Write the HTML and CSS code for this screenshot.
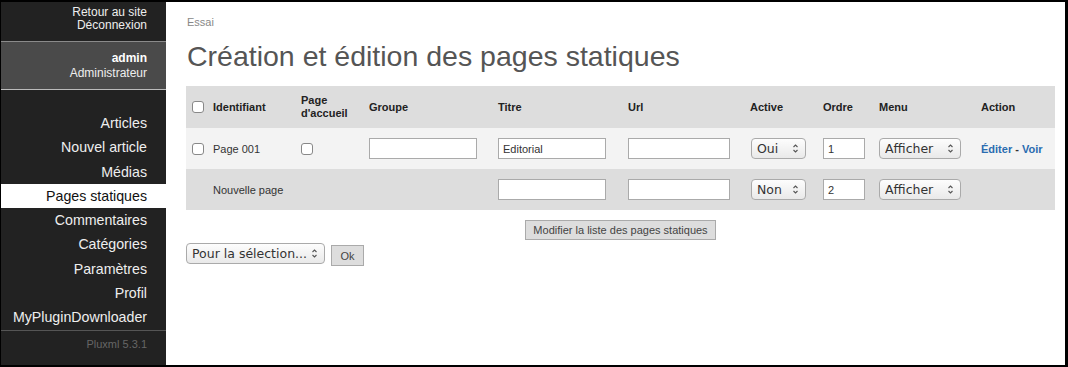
FILE: index.html
```html
<!DOCTYPE html>
<html lang="fr">

<head>
    <meta charset="UTF-8">
    <title>Pages statiques - Pluxml</title>
    <link rel="stylesheet" href="styles.css">
</head>

<body>
    <div class="frame">
        <aside class="sidebar">
            <div class="top-links">
                <a href="#">Retour au site</a>
                <a href="#">Déconnexion</a>
            </div>
            <div class="user">
                <strong>admin</strong>
                <span>Administrateur</span>
            </div>
            <ul class="menu">
                <li><a href="#">Articles</a></li>
                <li><a href="#">Nouvel article</a></li>
                <li><a href="#">Médias</a></li>
                <li class="active"><a href="#">Pages statiques</a></li>
                <li><a href="#">Commentaires</a></li>
                <li><a href="#">Catégories</a></li>
                <li><a href="#">Paramètres</a></li>
                <li><a href="#">Profil</a></li>
                <li><a href="#">MyPluginDownloader</a></li>
            </ul>
            <p class="version">Pluxml 5.3.1</p>
        </aside>

        <main class="content">
            <p class="breadcrumb">Essai</p>
            <h1>Création et édition des pages statiques</h1>

            <form>
                <table class="statics">
                    <colgroup>
                        <col style="width: 22px">
                        <col style="width: 88px">
                        <col style="width: 68px">
                        <col style="width: 129px">
                        <col style="width: 130px">
                        <col style="width: 122px">
                        <col style="width: 73px">
                        <col style="width: 56px">
                        <col style="width: 102px">
                        <col style="width: 79px">
                    </colgroup>
                    <thead>
                        <tr>
                            <th class="cb"><input type="checkbox"></th>
                            <th>Identifiant</th>
                            <th>Page d'accueil</th>
                            <th>Groupe</th>
                            <th>Titre</th>
                            <th>Url</th>
                            <th>Active</th>
                            <th>Ordre</th>
                            <th>Menu</th>
                            <th>Action</th>
                        </tr>
                    </thead>
                    <tbody>
                        <tr class="line">
                            <td class="cb"><input type="checkbox"></td>
                            <td>Page 001</td>
                            <td><input type="checkbox"></td>
                            <td><input type="text" class="w-groupe"></td>
                            <td><input type="text" class="w-titre" value="Editorial"></td>
                            <td><input type="text" class="w-url"></td>
                            <td>
                                <span class="select w-active">
                                    <select><option>Oui</option><option>Non</option></select>
                                    <svg viewBox="0 0 7 11" width="7" height="11"><path d="M1.5 4 L3.5 2 L5.5 4 M1.5 7 L3.5 9 L5.5 7" fill="none" stroke="#555" stroke-width="1.1"/></svg>
                                </span>
                            </td>
                            <td><input type="text" class="w-ordre" value="1"></td>
                            <td>
                                <span class="select w-menu">
                                    <select><option>Afficher</option><option>Masquer</option></select>
                                    <svg viewBox="0 0 7 11" width="7" height="11"><path d="M1.5 4 L3.5 2 L5.5 4 M1.5 7 L3.5 9 L5.5 7" fill="none" stroke="#555" stroke-width="1.1"/></svg>
                                </span>
                            </td>
                            <td class="actions"><a href="#">Éditer</a> - <a href="#">Voir</a></td>
                        </tr>
                        <tr class="new">
                            <td class="cb"></td>
                            <td>Nouvelle page</td>
                            <td></td>
                            <td></td>
                            <td><input type="text" class="w-titre"></td>
                            <td><input type="text" class="w-url"></td>
                            <td>
                                <span class="select w-active">
                                    <select><option>Non</option><option>Oui</option></select>
                                    <svg viewBox="0 0 7 11" width="7" height="11"><path d="M1.5 4 L3.5 2 L5.5 4 M1.5 7 L3.5 9 L5.5 7" fill="none" stroke="#555" stroke-width="1.1"/></svg>
                                </span>
                            </td>
                            <td><input type="text" class="w-ordre" value="2"></td>
                            <td>
                                <span class="select w-menu">
                                    <select><option>Afficher</option><option>Masquer</option></select>
                                    <svg viewBox="0 0 7 11" width="7" height="11"><path d="M1.5 4 L3.5 2 L5.5 4 M1.5 7 L3.5 9 L5.5 7" fill="none" stroke="#555" stroke-width="1.1"/></svg>
                                </span>
                            </td>
                            <td></td>
                        </tr>
                    </tbody>
                </table>

                <p class="submit">
                    <button type="button" class="btn">Modifier la liste des pages statiques</button>
                </p>

                <p class="bulk">
                    <span class="select w-bulk">
                        <select><option>Pour la sélection...</option><option>Supprimer</option></select>
                        <svg viewBox="0 0 7 11" width="7" height="11"><path d="M1.5 4 L3.5 2 L5.5 4 M1.5 7 L3.5 9 L5.5 7" fill="none" stroke="#555" stroke-width="1.1"/></svg>
                    </span>
                    <button type="button" class="btn ok">Ok</button>
                </p>
            </form>
        </main>
    </div>
</body>

</html>
```

FILE: styles.css
```css
* {
    margin: 0;
    padding: 0;
    box-sizing: border-box;
}

body {
    font-family: "Liberation Sans", Arial, sans-serif;
    background: #000;
    width: 1068px;
    height: 367px;
    overflow: hidden;
}

a {
    text-decoration: none;
    color: inherit;
}

.frame {
    display: flex;
    height: 367px;
    border-style: solid;
    border-color: #000;
    border-width: 2px 3px 2px 1px;
}

/* Barre latérale */
.sidebar {
    width: 165px;
    flex: none;
    background: #222;
    color: #eee;
    text-align: right;
    display: flex;
    flex-direction: column;
}

.top-links {
    display: flex;
    flex-direction: column;
    font-size: 12px;
    line-height: 13px;
    padding: 4px 19px 0 0;
    height: 40px;
    border-bottom: 1px solid #8a8a8a;
}

.user {
    display: flex;
    flex-direction: column;
    background: #4a4a4a;
    font-size: 12px;
    line-height: 15px;
    padding: 9px 19px 0 0;
    height: 48px;
    border-bottom: 1px solid #bbb;
}

.user strong {
    color: #fff;
}

.menu {
    list-style: none;
    padding-top: 21px;
    font-size: 14.2px;
}

.menu li a {
    display: block;
    height: 24.25px;
    line-height: 24px;
    padding-right: 19px;
}

.menu li.active a {
    background: #fff;
    color: #111;
}

.version {
    margin-top: 1px;
    border-top: 1px solid #555;
    font-size: 11px;
    color: #666;
    padding: 7px 19px 0 0;
}

/* Contenu */
.content {
    flex: 1;
    background: #fff;
    padding: 14px 10px 0 20px;
    color: #333;
}

.breadcrumb {
    font-size: 11px;
    color: #888;
    padding-left: 1px;
    line-height: 13px;
}

h1 {
    font-size: 28.5px;
    font-weight: normal;
    color: #555;
    line-height: 32px;
    margin: 11px 0 14px 1px;
}

.statics {
    width: 869px;
    border-collapse: collapse;
    table-layout: fixed;
    font-size: 11px;
}

.statics th {
    background: #ddd;
    text-align: left;
    font-weight: bold;
    color: #222;
    height: 42px;
    padding: 0 5px;
    line-height: 13px;
    vertical-align: middle;
}

.statics td {
    height: 41px;
    padding: 0 5px;
    color: #333;
    vertical-align: middle;
}

.statics .cb {
    padding: 0 0 0 6px;
}

.line td {
    background: #f3f3f3;
}

.new td {
    background: #ddd;
}

input[type="checkbox"] {
    appearance: none;
    display: block;
    width: 12px;
    height: 12px;
    border: 1px solid #888;
    border-radius: 3px;
    background: #fff;
}

input[type="text"] {
    display: block;
    height: 21px;
    border: 1px solid #aaa;
    background: #fff;
    font-family: "Liberation Sans", Arial, sans-serif;
    font-size: 11px;
    color: #333;
    padding: 0 4px;
}

.w-groupe { width: 108px; }
.w-titre { width: 108px; }
.w-url { width: 102px; }
.w-ordre { width: 42px; }

.select {
    position: relative;
    display: block;
}

.select select {
    appearance: none;
    display: block;
    width: 100%;
    height: 21px;
    border: 1px solid #aaa;
    border-radius: 4px;
    background: linear-gradient(#fdfdfd, #e9e9e9);
    font-family: "DejaVu Sans", sans-serif;
    font-size: 12.5px;
    color: #333;
    padding: 0 0 0 5px;
}

.select svg {
    position: absolute;
    right: 7px;
    top: 5px;
}

.w-active { width: 55px; margin-left: 1px; }
.w-menu { width: 82px; }
.w-bulk { width: 139px; }

.actions {
    font-weight: bold;
    white-space: nowrap;
}

.actions a {
    color: #2a6cb0;
}

.submit {
    text-align: center;
    margin-top: 10px;
}

.btn {
    background: #ddd;
    border: 1px solid #aaa;
    font-family: "Liberation Sans", Arial, sans-serif;
    font-size: 11px;
    color: #444;
    height: 20px;
    padding: 0 7px;
}

.bulk {
    display: flex;
    align-items: flex-start;
    gap: 6px;
    margin-top: 3px;
}

.ok {
    width: 33px;
    height: 21px;
    padding: 0;
    margin-top: 2px;
}
```
